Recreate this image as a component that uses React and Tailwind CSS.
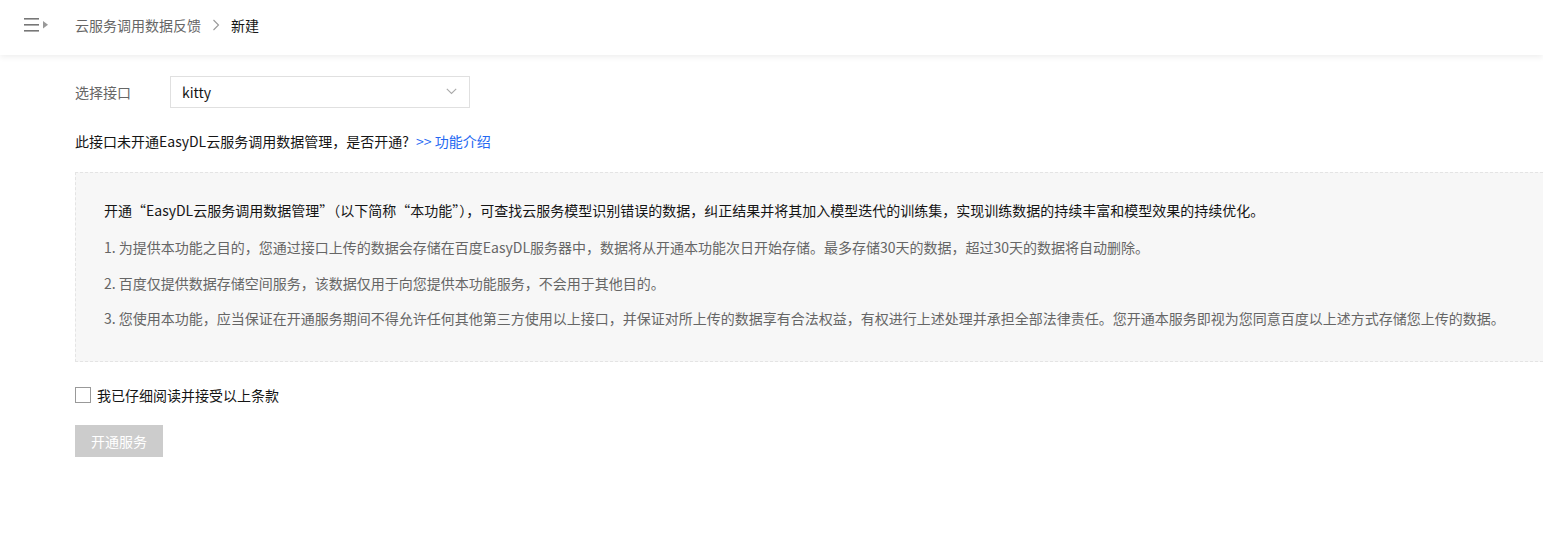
import React, { useState } from 'react'

const font = { fontFamily: '"Noto Sans CJK SC", "Noto Sans", sans-serif' }

function MenuIcon() {
  return (
    <svg width="26" height="16" viewBox="0 0 26 16" className="text-[#777]">
      <rect x="0" y="1" width="15" height="1.6" fill="currentColor" />
      <rect x="0" y="7" width="15" height="1.6" fill="currentColor" />
      <rect x="0" y="13" width="15" height="1.6" fill="currentColor" />
      <path d="M19 4 L24 7.8 L19 11.6 Z" fill="#999" />
    </svg>
  )
}

function Header() {
  return (
    <div className="h-[55px] flex items-center pb-[6px] bg-white shadow-[0_2px_6px_rgba(0,0,0,0.07)] relative z-10">
      <div className="w-[75px] pl-[24px] flex items-center">
        <MenuIcon />
      </div>
      <div className="flex items-center text-sm">
        <span className="text-[#666]">云服务调用数据反馈</span>
        <svg width="8" height="12" viewBox="0 0 8 12" className="mx-[11px]">
          <path d="M1.5 1 L6.5 6 L1.5 11" fill="none" stroke="#999" strokeWidth="1.1" />
        </svg>
        <span className="text-[#151515]">新建</span>
      </div>
    </div>
  )
}

export default function App() {
  const [agreed, setAgreed] = useState(false)

  return (
    <div className="min-h-[550px] bg-white" style={font}>
      <Header />

      <div className="pl-[75px]">
        {/* 选择接口 */}
        <div className="flex items-center mt-[21px] h-[32px]">
          <span className="w-[95px] text-sm text-[#666] pb-[1px]">选择接口</span>
          <div className="w-[300px] h-[32px] border border-[#e0e0e0] flex items-center justify-between pl-[11px] pr-[12px] pb-[1px]">
            <span className="text-sm text-[#151515]">kitty</span>
            <svg width="11" height="7" viewBox="0 0 11 7">
              <path d="M0.8 0.8 L5.5 5.5 L10.2 0.8" fill="none" stroke="#aaa" strokeWidth="1.1" />
            </svg>
          </div>
        </div>

        <div className="mt-[22px] text-sm text-[#151515] leading-[22px]">
          此接口未开通EasyDL云服务调用数据管理，是否开通?{' '}
          <span className="text-[#2468f2] ml-[4px]">&gt;&gt; 功能介绍</span>
        </div>

        {/* 说明 */}
        <div className="mt-[20px] bg-[#f7f7f7] border-t border-l border-b border-dashed border-[#e4e4e4] pl-[28px] pt-[26px] pb-[32px] text-sm">
          <p className="text-[#151515] leading-[22px]">
            开通“EasyDL云服务调用数据管理”（以下简称“本功能”），可查找云服务模型识别错误的数据，纠正结果并将其加入模型迭代的训练集，实现训练数据的持续丰富和模型效果的持续优化。
          </p>
          <p className="text-[#666] leading-[22px] mt-[15px]">
            1. 为提供本功能之目的，您通过接口上传的数据会存储在百度EasyDL服务器中，数据将从开通本功能次日开始存储。最多存储30天的数据，超过30天的数据将自动删除。
          </p>
          <p className="text-[#666] leading-[22px] mt-[14px]">
            2. 百度仅提供数据存储空间服务，该数据仅用于向您提供本功能服务，不会用于其他目的。
          </p>
          <p className="text-[#666] leading-[22px] mt-[13px]">
            3. 您使用本功能，应当保证在开通服务期间不得允许任何其他第三方使用以上接口，并保证对所上传的数据享有合法权益，有权进行上述处理并承担全部法律责任。您开通本服务即视为您同意百度以上述方式存储您上传的数据。
          </p>
        </div>

        <label className="mt-[24px] flex items-center cursor-pointer w-fit">
          <span
            onClick={() => setAgreed(!agreed)}
            className={`w-[16px] h-[16px] border ${agreed ? 'border-[#2468f2] bg-[#2468f2]' : 'border-[#999] bg-white'}`}
          />
          <span className="ml-[6px] text-sm text-[#151515] leading-[18px]">我已仔细阅读并接受以上条款</span>
        </label>

        <button
          disabled={!agreed}
          className={`mt-[21px] w-[88px] h-[32px] text-sm text-white ${agreed ? 'bg-[#2468f2]' : 'bg-[#cccccc]'}`}
        >
          开通服务
        </button>
      </div>
    </div>
  )
}
